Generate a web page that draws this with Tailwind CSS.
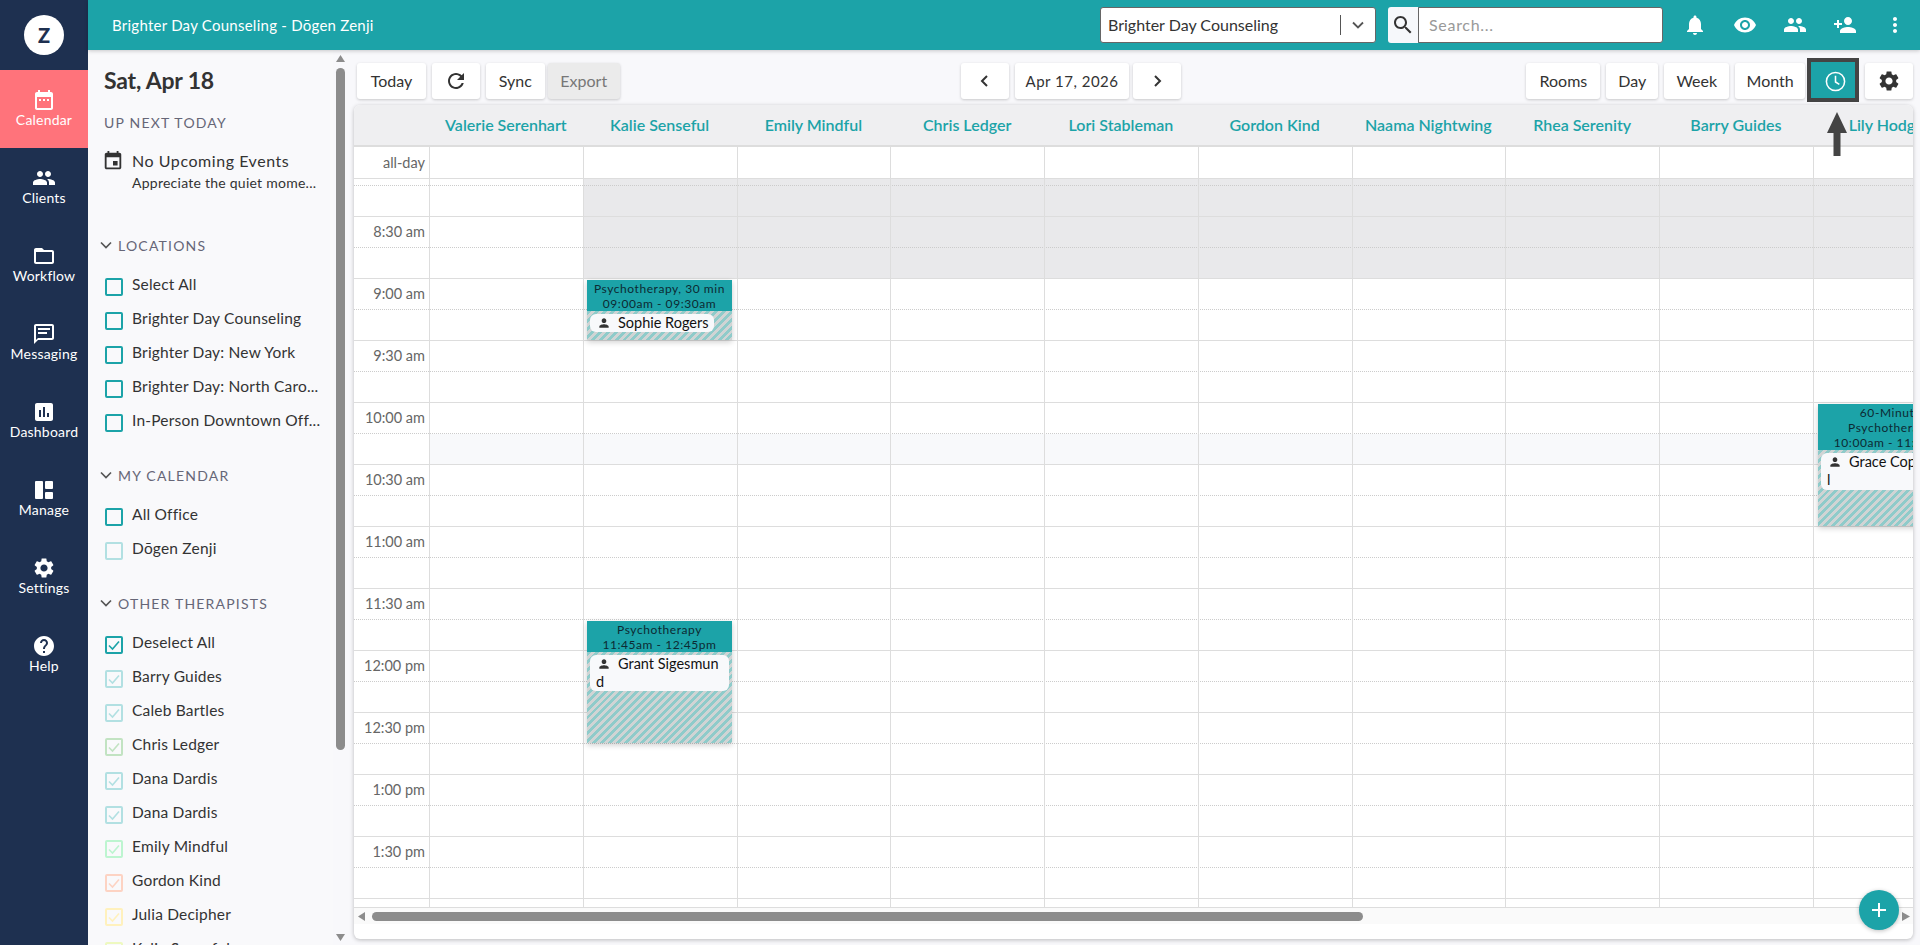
<!DOCTYPE html>
<html lang="en">
<head>
<meta charset="utf-8">
<title>Calendar</title>
<script src="https://cdn.jsdelivr.net/npm/@tailwindcss/browser@4"></script>
</head>
<body class="font-['Lato','Liberation_Sans',sans-serif] text-[#333] bg-[#f8f8fb]">
<div class="relative flex h-[945px] w-[1920px] overflow-hidden">

<!-- NAV -->
<nav class="w-[88px] shrink-0 bg-[#1e3050] text-white flex flex-col items-center">
  <div class="h-[70px] flex items-center justify-center w-full">
    <div class="w-[40px] h-[40px] rounded-full bg-white text-[#1e3050] font-black text-[20px] flex items-center justify-center">Z</div>
  </div>
  <a class="w-full h-[78px] bg-[#ff737b] flex flex-col items-center pt-[18px] text-[14px] leading-[18px] tracking-[0.2px]">
    <svg class="w-[24px] h-[24px] -mb-[1px]" viewBox="0 0 24 24" fill="currentColor"><path d="M9 11H7v2h2v-2zm4 0h-2v2h2v-2zm4 0h-2v2h2v-2zm2-7h-1V2h-2v2H8V2H6v2H5c-1.11 0-1.99.9-1.99 2L3 20c0 1.1.89 2 2 2h14c1.1 0 2-.9 2-2V6c0-1.1-.9-2-2-2zm0 16H5V9h14v11z"/></svg>Calendar</a>
  <a class="w-full h-[78px] flex flex-col items-center pt-[18px] text-[14px] leading-[18px] tracking-[0.2px]">
    <svg class="w-[24px] h-[24px] -mb-[1px]" viewBox="0 0 24 24" fill="currentColor"><path d="M16 11c1.66 0 2.99-1.34 2.99-3S17.66 5 16 5c-1.66 0-3 1.34-3 3s1.34 3 3 3zm-8 0c1.66 0 2.99-1.34 2.99-3S9.66 5 8 5C6.34 5 5 6.34 5 8s1.34 3 3 3zm0 2c-2.33 0-7 1.17-7 3.5V19h14v-2.5c0-2.33-4.67-3.5-7-3.5zm8 0c-.29 0-.62.02-.97.05 1.16.84 1.97 1.97 1.97 3.45V19h6v-2.5c0-2.33-4.67-3.5-7-3.5z"/></svg>Clients</a>
  <a class="w-full h-[78px] flex flex-col items-center pt-[18px] text-[14px] leading-[18px] tracking-[0.2px]">
    <svg class="w-[24px] h-[24px] -mb-[1px]" viewBox="0 0 24 24" fill="currentColor"><path d="M20 6h-8l-2-2H4c-1.1 0-1.99.9-1.99 2L2 18c0 1.1.9 2 2 2h16c1.1 0 2-.9 2-2V8c0-1.1-.9-2-2-2zm0 12H4V8h16v10z"/></svg>Workflow</a>
  <a class="w-full h-[78px] flex flex-col items-center pt-[18px] text-[14px] leading-[18px] tracking-[0.2px]">
    <svg class="w-[24px] h-[24px] -mb-[1px]" viewBox="0 0 24 24" fill="currentColor"><path d="M20 2H4c-1.1 0-2 .9-2 2v18l4-4h14c1.1 0 2-.9 2-2V4c0-1.1-.9-2-2-2zm0 14H6l-2 2V4h16v12zM6 6h12v2H6zM6 10h9v2H6z"/></svg>Messaging</a>
  <a class="w-full h-[78px] flex flex-col items-center pt-[18px] text-[14px] leading-[18px] tracking-[0.2px]">
    <svg class="w-[24px] h-[24px] -mb-[1px]" viewBox="0 0 24 24" fill="currentColor"><path d="M19 3H5c-1.1 0-2 .9-2 2v14c0 1.1.9 2 2 2h14c1.1 0 2-.9 2-2V5c0-1.1-.9-2-2-2zM9 17H7v-7h2v7zm4 0h-2V7h2v10zm4 0h-2v-4h2v4z"/></svg>Dashboard</a>
  <a class="w-full h-[78px] flex flex-col items-center pt-[18px] text-[14px] leading-[18px] tracking-[0.2px]">
    <svg class="w-[24px] h-[24px] -mb-[1px]" viewBox="0 0 24 24" fill="currentColor"><rect x="3" y="3" width="8" height="18" rx="1"/><rect x="13" y="3" width="8" height="8" rx="1"/><rect x="13" y="14" width="8" height="7" rx="1"/></svg>Manage</a>
  <a class="w-full h-[78px] flex flex-col items-center pt-[18px] text-[14px] leading-[18px] tracking-[0.2px]">
    <svg class="w-[24px] h-[24px] -mb-[1px]" viewBox="0 0 24 24" fill="currentColor"><path d="M19.14 12.94c.04-.3.06-.61.06-.94 0-.32-.02-.64-.07-.94l2.03-1.58c.18-.14.23-.41.12-.61l-1.92-3.32c-.12-.22-.37-.29-.59-.22l-2.39.96c-.5-.38-1.03-.7-1.62-.94l-.36-2.54c-.04-.24-.24-.41-.48-.41h-3.84c-.24 0-.43.17-.47.41l-.36 2.54c-.59.24-1.13.57-1.62.94l-2.39-.96c-.22-.08-.47 0-.59.22L2.74 8.87c-.12.21-.08.47.12.61l2.03 1.58c-.05.3-.09.63-.09.94s.02.64.07.94l-2.03 1.58c-.18.14-.23.41-.12.61l1.92 3.32c.12.22.37.29.59.22l2.39-.96c.5.38 1.03.7 1.62.94l.36 2.54c.05.24.24.41.48.41h3.84c.24 0 .44-.17.47-.41l.36-2.54c.59-.24 1.13-.56 1.62-.94l2.39.96c.22.08.47 0 .59-.22l1.92-3.32c.12-.22.07-.47-.12-.61l-2.01-1.58zM12 15.6c-1.98 0-3.6-1.62-3.6-3.6s1.62-3.6 3.6-3.6 3.6 1.62 3.6 3.6-1.62 3.6-3.6 3.6z"/></svg>Settings</a>
  <a class="w-full h-[78px] flex flex-col items-center pt-[18px] text-[14px] leading-[18px] tracking-[0.2px]">
    <svg class="w-[24px] h-[24px] -mb-[1px]" viewBox="0 0 24 24" fill="currentColor"><path d="M12 2C6.48 2 2 6.48 2 12s4.48 10 10 10 10-4.48 10-10S17.52 2 12 2zm1 17h-2v-2h2v2zm2.07-7.75l-.9.92C13.45 12.9 13 13.5 13 15h-2v-.5c0-1.1.45-2.1 1.17-2.83l1.24-1.26c.37-.36.59-.86.59-1.41 0-1.1-.9-2-2-2s-2 .9-2 2H8c0-2.21 1.79-4 4-4s4 1.79 4 4c0 .88-.36 1.68-.93 2.25z"/></svg>Help</a>
</nav>

<div class="flex-1 min-w-0 flex flex-col">
  <!-- TOPBAR -->
  <header class="relative z-20 h-[50px] shrink-0 bg-[#1ca3a8] shadow-[0_1px_4px_rgba(0,0,0,0.2)] flex items-center text-white">
    <div class="ml-[24px] text-[15px] tracking-[0.25px]">Brighter Day Counseling - Dōgen Zenji</div>
    <div class="ml-auto w-[276px] h-[36px] bg-white rounded-[3px] border border-[#666] flex items-center text-[#333] text-[16px]">
      <span class="pl-[7px] flex-1">Brighter Day Counseling</span>
      <span class="w-px h-[20px] bg-[#555]"></span>
      <svg class="w-[16px] h-[16px] mx-[9px]" viewBox="0 0 16 16" fill="none" stroke="#555" stroke-width="1.8"><path d="M3 5.5 8 10.5 13 5.5"/></svg>
    </div>
    <div class="ml-[12px] w-[30px] h-[36px] bg-[#f6f8fb] rounded-l-[3px] flex items-center justify-center">
      <svg class="w-[24px] h-[24px]" viewBox="0 0 24 24" fill="#333"><path d="M15.5 14h-.79l-.28-.27C15.41 12.59 16 11.11 16 9.5 16 5.91 13.09 3 9.5 3S3 5.91 3 9.5 5.91 16 9.5 16c1.61 0 3.09-.59 4.23-1.57l.27.28v.79l5 4.99L20.49 19l-4.99-5zm-6 0C7.01 14 5 11.99 5 9.5S7.01 5 9.5 5 14 7.01 14 9.5 11.99 14 9.5 14z"/></svg>
    </div>
    <div class="w-[245px] h-[36px] bg-white rounded-r-[3px] border border-[#666] flex items-center pl-[10px] text-[16px] tracking-[0.7px] text-[#999]">Search...</div>
    <div class="ml-[20px] flex items-center gap-[26px] pr-[13px]">
      <svg class="w-[24px] h-[24px]" viewBox="0 0 24 24" fill="currentColor"><path d="M12 22c1.1 0 2-.9 2-2h-4c0 1.1.89 2 2 2zm6-6v-5c0-3.07-1.64-5.64-4.5-6.32V4c0-.83-.67-1.5-1.5-1.5s-1.5.67-1.5 1.5v.68C7.63 5.36 6 7.92 6 11v5l-2 2v1h16v-1l-2-2z"/></svg>
      <svg class="w-[24px] h-[24px]" viewBox="0 0 24 24" fill="currentColor"><path d="M12 4.5C7 4.5 2.73 7.61 1 12c1.73 4.39 6 7.5 11 7.5s9.27-3.11 11-7.5c-1.73-4.39-6-7.5-11-7.5zM12 17c-2.76 0-5-2.24-5-5s2.24-5 5-5 5 2.24 5 5-2.24 5-5 5zm0-8c-1.66 0-3 1.34-3 3s1.34 3 3 3 3-1.34 3-3-1.34-3-3-3z"/></svg>
      <svg class="w-[24px] h-[24px]" viewBox="0 0 24 24" fill="currentColor"><path d="M16 11c1.66 0 2.99-1.34 2.99-3S17.66 5 16 5c-1.66 0-3 1.34-3 3s1.34 3 3 3zm-8 0c1.66 0 2.99-1.34 2.99-3S9.66 5 8 5C6.34 5 5 6.34 5 8s1.34 3 3 3zm0 2c-2.33 0-7 1.17-7 3.5V19h14v-2.5c0-2.33-4.67-3.5-7-3.5zm8 0c-.29 0-.62.02-.97.05 1.16.84 1.97 1.97 1.97 3.45V19h6v-2.5c0-2.33-4.67-3.5-7-3.5z"/></svg>
      <svg class="w-[24px] h-[24px]" viewBox="0 0 24 24" fill="currentColor"><path d="M15 12c2.21 0 4-1.79 4-4s-1.79-4-4-4-4 1.79-4 4 1.79 4 4 4zm-9-2V7H4v3H1v2h3v3h2v-3h3v-2H6zm9 4c-2.67 0-8 1.34-8 4v2h16v-2c0-2.66-5.33-4-8-4z"/></svg>
      <svg class="w-[24px] h-[24px]" viewBox="0 0 24 24" fill="currentColor"><path d="M12 8c1.1 0 2-.9 2-2s-.9-2-2-2-2 .9-2 2 .9 2 2 2zm0 2c-1.1 0-2 .9-2 2s.9 2 2 2 2-.9 2-2-.9-2-2-2zm0 6c-1.1 0-2 .9-2 2s.9 2 2 2 2-.9 2-2-.9-2-2-2z"/></svg>
    </div>
  </header>

  <div class="flex-1 min-h-0 flex">
    <!-- SIDEBAR -->
    <aside class="w-[245px] shrink-0 bg-[#f9f9fb] overflow-hidden pl-[16px]">
      <h1 class="mt-[14px] h-[32px] leading-[32px] text-[23px] tracking-[-0.2px] font-bold text-[#333]">Sat, Apr 18</h1>
      <div class="mt-[17px] h-[20px] leading-[20px] text-[14px] text-[#667] tracking-[1.2px]">UP NEXT TODAY</div>
      <div class="mt-[17px] flex">
        <svg class="w-[22px] h-[22px] -ml-[2px] mr-[8px] mt-[0px]" viewBox="0 0 24 24" fill="#333"><path d="M17 12h-5v5h5v-5zM16 1v2H8V1H6v2H5c-1.11 0-1.99.9-1.99 2L3 19c0 1.1.89 2 2 2h14c1.1 0 2-.9 2-2V5c0-1.1-.9-2-2-2h-1V1h-2zm3 18H5V8h14v11z"/></svg>
        <div>
          <div class="h-[22px] leading-[22px] text-[16px] tracking-[0.55px]">No Upcoming Events</div>
          <div class="h-[22px] leading-[22px] text-[14px] tracking-[0.25px]">Appreciate the quiet mome...</div>
        </div>
      </div>

      <div class="mt-[41px] h-[20px] flex items-center text-[14px] text-[#667] tracking-[1.2px] -ml-[4px]">
        <svg class="w-[12px] h-[12px] mr-[6px]" viewBox="0 0 12 12" fill="none" stroke="#555" stroke-width="1.7"><path d="M1 3.5 6 8.5 11 3.5"/></svg>LOCATIONS</div>
      <ul class="mt-[13px] ml-[1px] text-[15.5px] tracking-[0.2px]">
        <li class="h-[34px] flex items-center gap-[9px]"><span class="w-[18px] h-[18px] mt-[3px] rounded-[2px] border-2 border-[#1ca3a8]"></span>Select All</li>
        <li class="h-[34px] flex items-center gap-[9px]"><span class="w-[18px] h-[18px] mt-[3px] rounded-[2px] border-2 border-[#1ca3a8]"></span>Brighter Day Counseling</li>
        <li class="h-[34px] flex items-center gap-[9px]"><span class="w-[18px] h-[18px] mt-[3px] rounded-[2px] border-2 border-[#1ca3a8]"></span>Brighter Day: New York</li>
        <li class="h-[34px] flex items-center gap-[9px]"><span class="w-[18px] h-[18px] mt-[3px] rounded-[2px] border-2 border-[#1ca3a8]"></span>Brighter Day: North Caro...</li>
        <li class="h-[34px] flex items-center gap-[9px]"><span class="w-[18px] h-[18px] mt-[3px] rounded-[2px] border-2 border-[#1ca3a8]"></span>In-Person Downtown Off...</li>
      </ul>

      <div class="mt-[27px] h-[20px] flex items-center text-[14px] text-[#667] tracking-[1.2px] -ml-[4px]">
        <svg class="w-[12px] h-[12px] mr-[6px]" viewBox="0 0 12 12" fill="none" stroke="#555" stroke-width="1.7"><path d="M1 3.5 6 8.5 11 3.5"/></svg>MY CALENDAR</div>
      <ul class="mt-[13px] ml-[1px] text-[15.5px] tracking-[0.2px]">
        <li class="h-[34px] flex items-center gap-[9px]"><span class="w-[18px] h-[18px] mt-[3px] rounded-[2px] border-2 border-[#1ca3a8]"></span>All Office</li>
        <li class="h-[34px] flex items-center gap-[9px]"><span class="w-[18px] h-[18px] mt-[3px] rounded-[2px] border-2 border-[#b2e0e2]"></span>Dōgen Zenji</li>
      </ul>

      <div class="mt-[27px] h-[20px] flex items-center text-[14px] text-[#667] tracking-[1.2px] -ml-[4px]">
        <svg class="w-[12px] h-[12px] mr-[6px]" viewBox="0 0 12 12" fill="none" stroke="#555" stroke-width="1.7"><path d="M1 3.5 6 8.5 11 3.5"/></svg>OTHER THERAPISTS</div>
      <ul class="mt-[13px] ml-[1px] text-[15.5px] tracking-[0.2px]">
        <li class="h-[34px] flex items-center gap-[9px]"><span class="w-[18px] h-[18px] mt-[3px] rounded-[2px] border-2 border-[#1ca3a8] text-[#1ca3a8] flex items-center justify-center"><svg class="w-[14px] h-[14px]" viewBox="0 0 14 14" fill="none" stroke="currentColor" stroke-width="1.6"><path d="M2 7.5 5.500 11 12 3.500"/></svg></span>Deselect All</li>
        <li class="h-[34px] flex items-center gap-[9px]"><span class="w-[18px] h-[18px] mt-[3px] rounded-[2px] border-2 border-[#b2e0e2] text-[#b2e0e2] flex items-center justify-center"><svg class="w-[14px] h-[14px]" viewBox="0 0 14 14" fill="none" stroke="currentColor" stroke-width="1.6"><path d="M2 7.5 5.500 11 12 3.500"/></svg></span>Barry Guides</li>
        <li class="h-[34px] flex items-center gap-[9px]"><span class="w-[18px] h-[18px] mt-[3px] rounded-[2px] border-2 border-[#b2e0e2] text-[#b2e0e2] flex items-center justify-center"><svg class="w-[14px] h-[14px]" viewBox="0 0 14 14" fill="none" stroke="currentColor" stroke-width="1.6"><path d="M2 7.5 5.500 11 12 3.500"/></svg></span>Caleb Bartles</li>
        <li class="h-[34px] flex items-center gap-[9px]"><span class="w-[18px] h-[18px] mt-[3px] rounded-[2px] border-2 border-[#c2e3c2] text-[#c2e3c2] flex items-center justify-center"><svg class="w-[14px] h-[14px]" viewBox="0 0 14 14" fill="none" stroke="currentColor" stroke-width="1.6"><path d="M2 7.5 5.500 11 12 3.500"/></svg></span>Chris Ledger</li>
        <li class="h-[34px] flex items-center gap-[9px]"><span class="w-[18px] h-[18px] mt-[3px] rounded-[2px] border-2 border-[#b2e0e2] text-[#b2e0e2] flex items-center justify-center"><svg class="w-[14px] h-[14px]" viewBox="0 0 14 14" fill="none" stroke="currentColor" stroke-width="1.6"><path d="M2 7.5 5.500 11 12 3.500"/></svg></span>Dana Dardis</li>
        <li class="h-[34px] flex items-center gap-[9px]"><span class="w-[18px] h-[18px] mt-[3px] rounded-[2px] border-2 border-[#b2e0e2] text-[#b2e0e2] flex items-center justify-center"><svg class="w-[14px] h-[14px]" viewBox="0 0 14 14" fill="none" stroke="currentColor" stroke-width="1.6"><path d="M2 7.5 5.500 11 12 3.500"/></svg></span>Dana Dardis</li>
        <li class="h-[34px] flex items-center gap-[9px]"><span class="w-[18px] h-[18px] mt-[3px] rounded-[2px] border-2 border-[#bdf5d0] text-[#bdf5d0] flex items-center justify-center"><svg class="w-[14px] h-[14px]" viewBox="0 0 14 14" fill="none" stroke="currentColor" stroke-width="1.6"><path d="M2 7.5 5.500 11 12 3.500"/></svg></span>Emily Mindful</li>
        <li class="h-[34px] flex items-center gap-[9px]"><span class="w-[18px] h-[18px] mt-[3px] rounded-[2px] border-2 border-[#fdd3c3] text-[#fdd3c3] flex items-center justify-center"><svg class="w-[14px] h-[14px]" viewBox="0 0 14 14" fill="none" stroke="currentColor" stroke-width="1.6"><path d="M2 7.5 5.500 11 12 3.500"/></svg></span>Gordon Kind</li>
        <li class="h-[34px] flex items-center gap-[9px]"><span class="w-[18px] h-[18px] mt-[3px] rounded-[2px] border-2 border-[#fff1bd] text-[#fff1bd] flex items-center justify-center"><svg class="w-[14px] h-[14px]" viewBox="0 0 14 14" fill="none" stroke="currentColor" stroke-width="1.6"><path d="M2 7.5 5.500 11 12 3.500"/></svg></span>Julia Decipher</li>
        <li class="h-[34px] flex items-center gap-[9px]"><span class="w-[18px] h-[18px] mt-[3px] rounded-[2px] border-2 border-[#eef9c0] text-[#eef9c0] flex items-center justify-center"><svg class="w-[14px] h-[14px]" viewBox="0 0 14 14" fill="none" stroke="currentColor" stroke-width="1.6"><path d="M2 7.5 5.500 11 12 3.500"/></svg></span>Kalie Senseful</li>
      </ul>
    </aside>

    <!-- SIDEBAR SCROLLBAR -->
    <div class="w-[21px] shrink-0 flex flex-col items-start pl-[3px]">
      <svg class="mt-[5px] w-[9px] h-[7px]" viewBox="0 0 9 7" fill="#8c8c8c"><path d="M4.5 0 9 7H0z"/></svg>
      <div class="mt-[6px] w-[9px] h-[682px] rounded-[5px] bg-[#8c8c8c]"></div>
      <svg class="mt-[184px] w-[9px] h-[7px]" viewBox="0 0 9 7" fill="#8c8c8c"><path d="M0 0h9L4.5 7z"/></svg>
    </div>

    <!-- MAIN -->
    <main class="w-[1559px] shrink-0 flex flex-col">
      <div class="h-[55px] pt-[13px] flex items-start text-[16px]">
        <button class="ml-[3px] w-[69px] h-[36px] bg-white rounded-[3px] shadow-[0_1px_3px_rgba(0,0,0,0.2)]">Today</button>
        <button class="ml-[6px] w-[48px] h-[36px] bg-white rounded-[3px] shadow-[0_1px_3px_rgba(0,0,0,0.2)] flex items-center justify-center"><svg class="w-[24px] h-[24px]" viewBox="0 0 24 24" fill="#333"><path d="M17.65 6.35C16.2 4.9 14.21 4 12 4c-4.42 0-7.99 3.58-7.99 8s3.57 8 7.99 8c3.73 0 6.84-2.55 7.73-6h-2.08c-.82 2.33-3.04 4-5.65 4-3.31 0-6-2.69-6-6s2.69-6 6-6c1.66 0 3.14.69 4.22 1.78L13 11h7V4l-2.35 2.35z"/></svg></button>
        <button class="ml-[6px] w-[59px] h-[36px] bg-white rounded-[3px] shadow-[0_1px_3px_rgba(0,0,0,0.2)]">Sync</button>
        <button class="ml-[3px] w-[72px] h-[36px] bg-[#ebebeb] text-[#777] rounded-[3px] shadow-[0_1px_3px_rgba(0,0,0,0.2)]">Export</button>
        <button class="ml-[341px] w-[48px] h-[36px] bg-white rounded-[3px] shadow-[0_1px_3px_rgba(0,0,0,0.2)] flex items-center justify-center"><svg class="w-[12px] h-[14px]" viewBox="0 0 12 14" fill="none" stroke="#333" stroke-width="2"><path d="M8 2 3 7l5 5"/></svg></button>
        <button class="ml-[6px] w-[115px] h-[36px] bg-white rounded-[3px] shadow-[0_1px_3px_rgba(0,0,0,0.2)] text-[15px] tracking-[0.5px]">Apr 17, 2026</button>
        <button class="ml-[4px] w-[48px] h-[36px] bg-white rounded-[3px] shadow-[0_1px_3px_rgba(0,0,0,0.2)] flex items-center justify-center"><svg class="w-[12px] h-[14px]" viewBox="0 0 12 14" fill="none" stroke="#333" stroke-width="2"><path d="m4 2 5 5-5 5"/></svg></button>
        <button class="ml-[345px] w-[74px] h-[36px] bg-white rounded-[3px] shadow-[0_1px_3px_rgba(0,0,0,0.2)]">Rooms</button>
        <button class="ml-[6px] w-[52px] h-[36px] bg-white rounded-[3px] shadow-[0_1px_3px_rgba(0,0,0,0.2)]">Day</button>
        <button class="ml-[6px] w-[65px] h-[36px] bg-white rounded-[3px] shadow-[0_1px_3px_rgba(0,0,0,0.2)]">Week</button>
        <button class="ml-[6px] w-[70px] h-[36px] bg-white rounded-[3px] shadow-[0_1px_3px_rgba(0,0,0,0.2)]">Month</button>
        <button class="ml-[2px] -mt-[5px] w-[52px] h-[44px] bg-[#1ca3a8] border-[4px] border-[#444] flex items-center justify-center"><svg class="w-[23px] h-[23px] translate-x-[2px] translate-y-[1px]" viewBox="0 0 24 24" fill="none" stroke="#fff" stroke-width="1.6"><circle cx="12" cy="12" r="9.5"/><path d="M12 6v6.5l4 2.5"/></svg></button>
        <button class="ml-[6px] w-[48px] h-[36px] bg-white rounded-[3px] shadow-[0_1px_3px_rgba(0,0,0,0.2)] flex items-center justify-center"><svg class="w-[24px] h-[24px]" viewBox="0 0 24 24" fill="#333"><path d="M19.14 12.94c.04-.3.06-.61.06-.94 0-.32-.02-.64-.07-.94l2.03-1.58c.18-.14.23-.41.12-.61l-1.92-3.32c-.12-.22-.37-.29-.59-.22l-2.39.96c-.5-.38-1.03-.7-1.62-.94l-.36-2.54c-.04-.24-.24-.41-.48-.41h-3.84c-.24 0-.43.17-.47.41l-.36 2.54c-.59.24-1.13.57-1.62.94l-2.39-.96c-.22-.08-.47 0-.59.22L2.74 8.87c-.12.21-.08.47.12.61l2.03 1.58c-.05.3-.09.63-.09.94s.02.64.07.94l-2.03 1.58c-.18.14-.23.41-.12.61l1.92 3.32c.12.22.37.29.59.22l2.39-.96c.5.38 1.03.7 1.62.94l.36 2.54c.05.24.24.41.48.41h3.84c.24 0 .44-.17.47-.41l.36-2.54c.59-.24 1.13-.56 1.62-.94l2.39.96c.22.08.47 0 .59-.22l1.92-3.32c.12-.22.07-.47-.12-.61l-2.01-1.58zM12 15.6c-1.98 0-3.6-1.62-3.6-3.6s1.62-3.6 3.6-3.6 3.6 1.62 3.6 3.6-1.62 3.6-3.6 3.6z"/></svg></button>
      </div>

      <!-- CALENDAR CARD -->
      <section class="w-[1559px] h-[834px] bg-white rounded-[6px] shadow-[0_1px_4px_rgba(0,0,0,0.25)] overflow-hidden flex flex-col">
        <div class="h-[42px] shrink-0 bg-[#efeff1] border-b-2 border-[#ddd] flex text-[16px] font-semibold text-[#1ca3a8]">
          <div class="w-[75px] shrink-0"></div>
          <div class="w-[153.75px] shrink-0 text-center leading-[39px]">Valerie Serenhart</div>
          <div class="w-[153.75px] shrink-0 text-center leading-[39px]">Kalie Senseful</div>
          <div class="w-[153.75px] shrink-0 text-center leading-[39px]">Emily Mindful</div>
          <div class="w-[153.75px] shrink-0 text-center leading-[39px]">Chris Ledger</div>
          <div class="w-[153.75px] shrink-0 text-center leading-[39px]">Lori Stableman</div>
          <div class="w-[153.75px] shrink-0 text-center leading-[39px]">Gordon Kind</div>
          <div class="w-[153.75px] shrink-0 text-center leading-[39px]">Naama Nightwing</div>
          <div class="w-[153.75px] shrink-0 text-center leading-[39px]">Rhea Serenity</div>
          <div class="w-[153.75px] shrink-0 text-center leading-[39px]">Barry Guides</div>
          <div class="w-[153.75px] shrink-0 text-center leading-[39px]">Lily Hodges</div>
        </div>

        <div class="relative h-[761px] shrink-0 overflow-hidden text-[14.5px] text-[#666]">
          <!-- bands -->
          <div class="absolute left-[230px] right-0 top-[32px] h-[99px] bg-[#e9e9eb]"></div>
          <div class="absolute left-[76px] right-0 top-[287px] h-[31px] bg-[#f8f9fb]"></div>

          <!-- rows -->
          <div class="relative">
            <div class="h-[32px] border-b border-[#ddd]"><span class="block w-[71px] text-right leading-[32px]">all-day</span></div>
            <div class="h-[38px] border-b border-[#ddd]"><div class="h-[7px] border-b border-dotted border-[#ccc]"></div></div>
            <div class="h-[62px] border-b border-[#ddd]"><div class="h-[31px] border-b border-dotted border-[#ccc]"><span class="block w-[71px] text-right leading-[30px]">8:30 am</span></div></div>
            <div class="h-[62px] border-b border-[#ddd]"><div class="h-[31px] border-b border-dotted border-[#ccc]"><span class="block w-[71px] text-right leading-[30px]">9:00 am</span></div></div>
            <div class="h-[62px] border-b border-[#ddd]"><div class="h-[31px] border-b border-dotted border-[#ccc]"><span class="block w-[71px] text-right leading-[30px]">9:30 am</span></div></div>
            <div class="h-[62px] border-b border-[#ddd]"><div class="h-[31px] border-b border-dotted border-[#ccc]"><span class="block w-[71px] text-right leading-[30px]">10:00 am</span></div></div>
            <div class="h-[62px] border-b border-[#ddd]"><div class="h-[31px] border-b border-dotted border-[#ccc]"><span class="block w-[71px] text-right leading-[30px]">10:30 am</span></div></div>
            <div class="h-[62px] border-b border-[#ddd]"><div class="h-[31px] border-b border-dotted border-[#ccc]"><span class="block w-[71px] text-right leading-[30px]">11:00 am</span></div></div>
            <div class="h-[62px] border-b border-[#ddd]"><div class="h-[31px] border-b border-dotted border-[#ccc]"><span class="block w-[71px] text-right leading-[30px]">11:30 am</span></div></div>
            <div class="h-[62px] border-b border-[#ddd]"><div class="h-[31px] border-b border-dotted border-[#ccc]"><span class="block w-[71px] text-right leading-[30px]">12:00 pm</span></div></div>
            <div class="h-[62px] border-b border-[#ddd]"><div class="h-[31px] border-b border-dotted border-[#ccc]"><span class="block w-[71px] text-right leading-[30px]">12:30 pm</span></div></div>
            <div class="h-[62px] border-b border-[#ddd]"><div class="h-[31px] border-b border-dotted border-[#ccc]"><span class="block w-[71px] text-right leading-[30px]">1:00 pm</span></div></div>
            <div class="h-[62px] border-b border-[#ddd]"><div class="h-[31px] border-b border-dotted border-[#ccc]"><span class="block w-[71px] text-right leading-[30px]">1:30 pm</span></div></div>
            <div class="h-[9px] border-b border-[#ddd]"></div>
          </div>

          <!-- vertical lines overlay -->
          <div class="absolute left-0 top-0 h-[760px] flex">
            <div class="w-[76px] shrink-0 border-r border-[#ddd]"></div>
            <div class="w-[153.75px] shrink-0 border-r border-[#ddd]"></div>
            <div class="w-[153.75px] shrink-0 border-r border-[#ddd]"></div>
            <div class="w-[153.75px] shrink-0 border-r border-[#ddd]"></div>
            <div class="w-[153.75px] shrink-0 border-r border-[#ddd]"></div>
            <div class="w-[153.75px] shrink-0 border-r border-[#ddd]"></div>
            <div class="w-[153.75px] shrink-0 border-r border-[#ddd]"></div>
            <div class="w-[153.75px] shrink-0 border-r border-[#ddd]"></div>
            <div class="w-[153.75px] shrink-0 border-r border-[#ddd]"></div>
            <div class="w-[153.75px] shrink-0 border-r border-[#ddd]"></div>
          </div>

          <!-- events -->
          <article class="absolute left-[233px] top-[133px] w-[145px] h-[60px] shadow-[0_2px_6px_rgba(0,0,0,0.2)] bg-[repeating-linear-gradient(135deg,#8fcbca_0,#8fcbca_2.8px,#d0d4d4_2.8px,#d0d4d4_5.6px)] text-[#111]">
            <div class="h-[31px] bg-[#1ca3a8] text-center text-[12px] leading-[15px] tracking-[0.55px] pt-[1px] text-[#0c2a33]">Psychotherapy, 30 min<br>09:00am - 09:30am</div>
            <div class="ml-[3px] mt-[3px] w-[124px] h-[18px] rounded-[6px] bg-[#f8f9fb] flex items-center text-[14.5px] leading-[18px] text-[#111]"><svg class="ml-[7px] mr-[7px] w-[14px] h-[14px]" viewBox="0 0 24 24" fill="#333"><path d="M12 12c2.21 0 4-1.79 4-4s-1.79-4-4-4-4 1.79-4 4 1.79 4 4 4zm0 2c-2.67 0-8 1.34-8 4v2h16v-2c0-2.66-5.33-4-8-4z"/></svg>Sophie Rogers</div>
          </article>
          <article class="absolute left-[233px] top-[474px] w-[145px] h-[122px] shadow-[0_2px_6px_rgba(0,0,0,0.2)] bg-[repeating-linear-gradient(135deg,#8fcbca_0,#8fcbca_2.8px,#d0d4d4_2.8px,#d0d4d4_5.6px)]">
            <div class="h-[31px] bg-[#1ca3a8] text-center text-[12px] leading-[15px] tracking-[0.55px] pt-[1px] text-[#0c2a33]">Psychotherapy<br>11:45am - 12:45pm</div>
            <div class="ml-[3px] mt-[3px] w-[139px] h-[36px] rounded-[6px] bg-[#f8f9fb] text-[14.5px] leading-[18px] text-[#111] px-[6px] break-all"><svg class="inline-block ml-[1px] mr-[7px] w-[14px] h-[14px] align-[-2px]" viewBox="0 0 24 24" fill="#333"><path d="M12 12c2.21 0 4-1.79 4-4s-1.79-4-4-4-4 1.79-4 4 1.79 4 4 4zm0 2c-2.67 0-8 1.34-8 4v2h16v-2c0-2.66-5.33-4-8-4z"/></svg>Grant Sigesmund</div>
          </article>
          <article class="absolute left-[1464px] top-[257px] w-[145px] h-[122px] shadow-[0_2px_6px_rgba(0,0,0,0.2)] bg-[repeating-linear-gradient(135deg,#8fcbca_0,#8fcbca_2.8px,#d0d4d4_2.8px,#d0d4d4_5.6px)]">
            <div class="h-[46px] bg-[#1ca3a8] text-center text-[12px] leading-[15px] tracking-[0.55px] pt-[1px] text-[#0c2a33]">60-Minute<br>Psychotherapy<br>10:00am - 11:00am</div>
            <div class="ml-[3px] mt-[3px] w-[139px] h-[37px] rounded-[6px] bg-[#f8f9fb] text-[14.5px] leading-[18px] text-[#111] px-[6px] break-all"><svg class="inline-block ml-[1px] mr-[7px] w-[14px] h-[14px] align-[-2px]" viewBox="0 0 24 24" fill="#333"><path d="M12 12c2.21 0 4-1.79 4-4s-1.79-4-4-4-4 1.79-4 4 1.79 4 4 4zm0 2c-2.67 0-8 1.34-8 4v2h16v-2c0-2.66-5.33-4-8-4z"/></svg>Grace Copperhill</div>
          </article>
        </div>

        <!-- horizontal scrollbar -->
        <div class="h-[16px] shrink-0 bg-[#fafafa] flex items-center">
          <svg class="ml-[4px] w-[7px] h-[9px]" viewBox="0 0 7 9" fill="#8c8c8c"><path d="M7 0v9L0 4.5z"/></svg>
          <div class="ml-[7px] w-[991px] h-[9px] rounded-[5px] bg-[#8c8c8c]"></div>
          <svg class="ml-auto mr-[3px] w-[8px] h-[9px]" viewBox="0 0 8 9" fill="#8c8c8c"><path d="M0 0v9l8-4.5z"/></svg>
        </div>
      </section>
    </main>
  </div>

  <!-- overlays -->
  <svg class="absolute left-[1827px] top-[112px] w-[20px] h-[44px]" viewBox="0 0 20 44" fill="#444"><path d="M10 0 20 21H13.5V44H6.500V21H0z"/></svg>
  <button class="absolute left-[1859px] top-[890px] w-[40px] h-[40px] rounded-full bg-[#1ca3a8] shadow-[0_1px_4px_rgba(0,0,0,0.25)] flex items-center justify-center"><svg class="w-[16px] h-[16px]" viewBox="0 0 16 16" fill="none" stroke="#fff" stroke-width="2"><path d="M8 1v14M1 8h14"/></svg></button>
</div>
</div>
</body>
</html>
